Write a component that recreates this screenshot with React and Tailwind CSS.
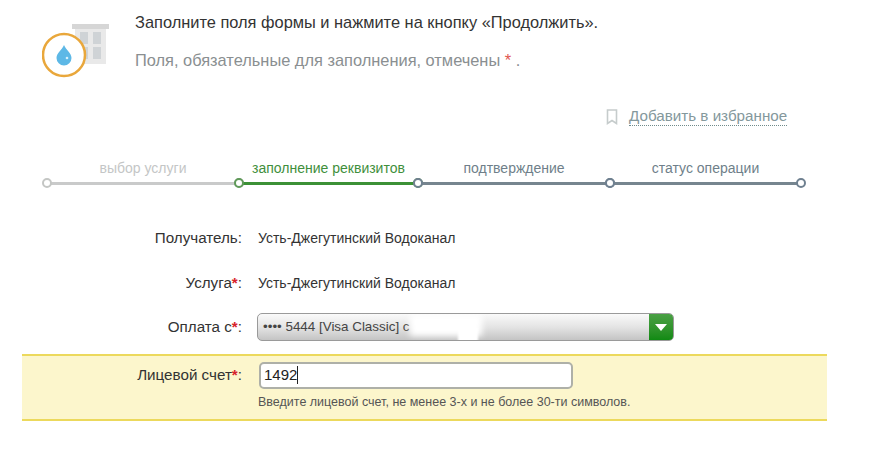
import React from 'react';

const steps = [
  { label: 'выбор услуги', width: 'w-[192px]', text: 'text-[#c4c6c6]', line: 'bg-[#c9caca]', dot: 'border-[#c4c6c4]' },
  { label: 'заполнение реквизитов', width: 'w-[179px]', text: 'text-[#3f8f3c]', line: 'bg-[#3c9136]', dot: 'border-[#5f9a59]' },
  { label: 'подтверждение', width: 'w-[192px]', text: 'text-[#6f7f8a]', line: 'bg-[#76858f]', dot: 'border-[#6f8090]' },
  { label: 'статус операции', width: 'w-[191px]', text: 'text-[#6f7f8a]', line: 'bg-[#76858f]', dot: 'border-[#6f8090]' },
];

function Dot({ color, className }) {
  return <span className={`absolute top-[-4px] h-[10px] w-[10px] rounded-full border-2 bg-white ${color} ${className}`} />;
}

function Logo() {
  return (
    <svg width="68" height="56" viewBox="0 0 68 56" className="mt-[11px] shrink-0">
      <rect x="30" y="2" width="37" height="5" fill="#d6d6d6" />
      <rect x="33" y="7" width="31" height="35" fill="#e9e9e9" />
      <rect x="38" y="10" width="8" height="12" fill="#cfd3d6" />
      <rect x="51" y="10" width="8" height="12" fill="#cfd3d6" />
      <rect x="51" y="25" width="8" height="12" fill="#cfd3d6" />
      <rect x="38" y="25" width="8" height="12" fill="#cfd3d6" />
      <circle cx="22" cy="33" r="21" fill="#fff" stroke="#e9a73b" strokeWidth="2.500" />
      <path d="M22 23 C24 28 29.500 31 29.500 36 A7.500 7.500 0 0 1 14.500 36 C14.500 31 20 28 22 23 Z" fill="#5db8e6" />
      <circle cx="25" cy="36" r="1.300" fill="#d6f0fb" />
    </svg>
  );
}

function Row({ label, required, children, className = '' }) {
  return (
    <div className={`flex items-center ${className}`}>
      <div className="w-[242px] text-right text-[15.200px] text-[#333]">
        {label}
        {required && <span className="font-bold text-[#d8232a]">*</span>}:
      </div>
      <div className="ml-[16px] min-w-0">{children}</div>
    </div>
  );
}

export default function App() {
  return (
    <div className="h-[450px] w-[870px] overflow-hidden bg-white font-['Liberation_Sans',sans-serif]">
      <div className="flex pl-[42px] pt-[11px]">
        <Logo />
        <div className="ml-[25px]">
          <p className="whitespace-nowrap text-[16.400px] leading-[22px] text-[#333]">Заполните поля формы и нажмите на кнопку «Продолжить».</p>
          <p className="mt-[16px] whitespace-nowrap text-[16.400px] leading-[22px] text-[#8a8f91]">
            Поля, обязательные для заполнения, отмечены <span className="text-[#e0564f]">*</span> .
          </p>
        </div>
      </div>

      <div className="mt-[29px] flex items-center pl-[606px]">
        <svg width="12" height="16" viewBox="0 0 12 16" className="shrink-0">
          <path d="M1.500 1h9v13.500l-4.500-3-4.500 3z" fill="none" stroke="#c6cccc" strokeWidth="1.600" />
        </svg>
        <span className="ml-[11px] border-b border-dotted border-[#6f8a8a] text-[15.200px] leading-[18px] text-[#84989c]">Добавить в избранное</span>
      </div>

      <div className="mt-[33px] flex pl-[47px]">
        {steps.map((step) => (
          <div key={step.label} className={`${step.width} shrink-0`}>
            <div className={`mb-[5px] text-center text-[14px] leading-[18px] ${step.text}`}>{step.label}</div>
            <div className={`relative h-[3px] ${step.line}`}>
              <Dot color={step.dot} className="left-[-5px]" />
              <Dot color={step.dot} className="right-[-5px]" />
            </div>
          </div>
        ))}
      </div>

      <div className="mt-[41px]">
        <Row label="Получатель" className="h-[24px]">
          <span className="text-[14px] text-[#333]">Усть-Джегутинский Водоканал</span>
        </Row>
        <Row label="Услуга" required className="mt-[21px] h-[24px]">
          <span className="text-[14px] text-[#333]">Усть-Джегутинский Водоканал</span>
        </Row>
        <Row label="Оплата с" required className="mt-[18px] h-[28px]">
          <div className="relative -ml-px flex h-[28px] w-[417px] overflow-hidden rounded-[5px] border border-[#9a9a9a] bg-gradient-to-b from-[#fafafa] via-[#e4e4e4] to-[#c4c4c4]">
            <span className="flex-1 pl-[5px] text-[13.400px] leading-[26px] text-[#444]">•••• 5444 [Visa Classic] с</span>
            <span className="flex w-[24px] items-center justify-center bg-gradient-to-b from-[#4aa044] to-[#0f8a12]">
              <span className="h-0 w-0 border-x-[6px] border-t-[7px] border-x-transparent border-t-white" />
            </span>
            <span className="absolute left-[152px] top-0 h-[22px] w-[72px] bg-white blur-[3px]" />
            <span className="absolute left-[200px] top-[14px] h-[16px] w-[20px] bg-white blur-[1px]" />
          </div>
        </Row>
      </div>

      <div className="ml-[22px] mt-[13px] h-[67px] w-[805px] border-y-2 border-[#ecd95c] bg-[#fcf6cc] pt-[5px]">
        <Row label="Лицевой счет" required className="-ml-[22px] h-[28px]">
          <div className="ml-[1px] flex h-[27px] w-[314px] items-center rounded-[5px] border-2 border-[#aeb0a8] bg-white pl-[3px] text-[15px] text-[#222]">
            1492<span className="h-[18px] w-px bg-[#222]" />
          </div>
        </Row>
        <p className="ml-[236px] mt-[5px] whitespace-nowrap text-[12.500px] leading-[16px] text-[#555]">Введите лицевой счет, не менее 3-х и не более 30-ти символов.</p>
      </div>
    </div>
  );
}
